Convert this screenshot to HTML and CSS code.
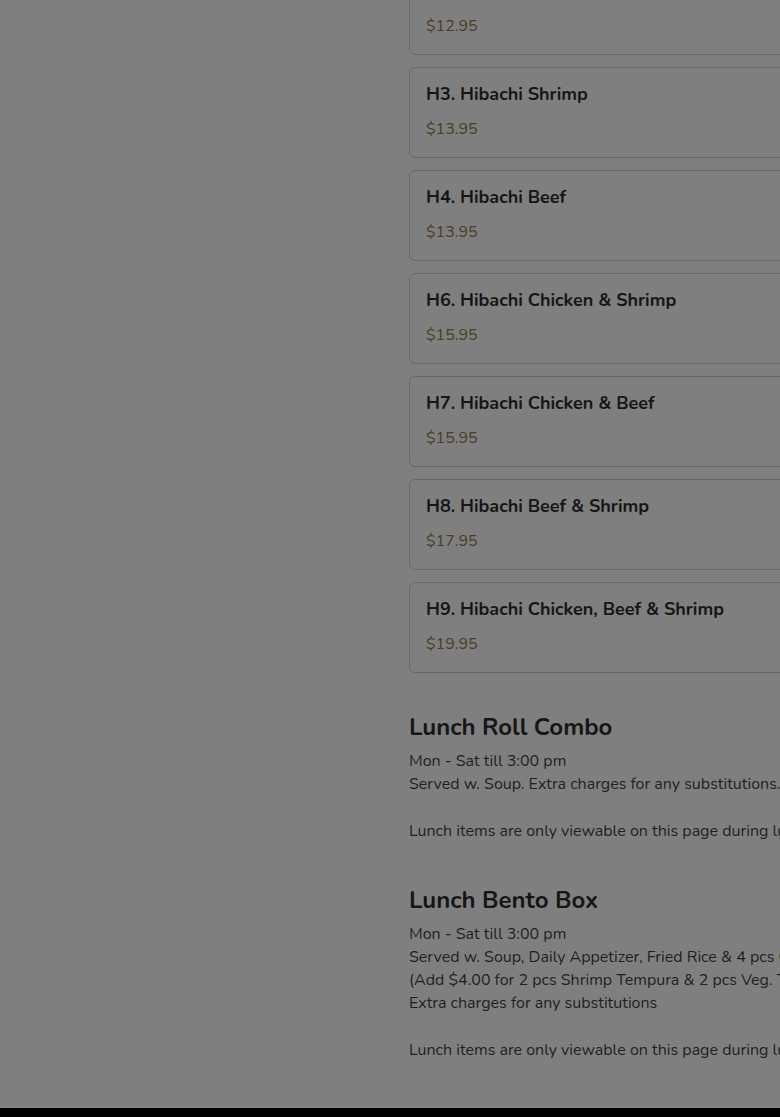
FILE: index.html
```html
<!DOCTYPE html>
<html>
<head>
<meta charset="utf-8">
<link rel="stylesheet" href="styles.css">
</head>
<body>
<div class="page">
  <div class="layout">
    <aside class="side"></aside>
    <main class="menu">
      <div class="cards">
        <div class="card"><div class="item-name">H2. Hibachi Chicken</div><div class="price">$12.95</div></div>
        <div class="card"><div class="item-name">H3. Hibachi Shrimp</div><div class="price">$13.95</div></div>
        <div class="card"><div class="item-name">H4. Hibachi Beef</div><div class="price">$13.95</div></div>
        <div class="card"><div class="item-name">H6. Hibachi Chicken &amp; Shrimp</div><div class="price">$15.95</div></div>
        <div class="card"><div class="item-name">H7. Hibachi Chicken &amp; Beef</div><div class="price">$15.95</div></div>
        <div class="card"><div class="item-name">H8. Hibachi Beef &amp; Shrimp</div><div class="price">$17.95</div></div>
        <div class="card"><div class="item-name">H9. Hibachi Chicken, Beef &amp; Shrimp</div><div class="price">$19.95</div></div>
      </div>
      <section class="section">
        <h2 class="section-title">Lunch Roll Combo</h2>
        <p class="section-desc">Mon - Sat till 3:00 pm<br>Served w. Soup. Extra charges for any substitutions.<br><br>Lunch items are only viewable on this page during lunch hours.</p>
      </section>
      <section class="section">
        <h2 class="section-title">Lunch Bento Box</h2>
        <p class="section-desc">Mon - Sat till 3:00 pm<br>Served w. Soup, Daily Appetizer, Fried Rice &amp; 4 pcs California Roll<br>(Add $4.00 for 2 pcs Shrimp Tempura &amp; 2 pcs Veg. Tempura)<br>Extra charges for any substitutions<br><br>Lunch items are only viewable on this page during lunch hours.</p>
      </section>
    </main>
  </div>
  <footer class="footer"></footer>
</div>
</body>
</html>
```
FILE: styles.css
```css
html, body {
  margin: 0;
  padding: 0;
  background: #7f7f7f;
}
body {
  font-family: "Nunito", "Lato", "Noto Sans", sans-serif;
  color: #1c1c1c;
}
.page {
  width: 780px;
  height: 1117px;
  overflow: hidden;
  display: flex;
  flex-direction: column;
}
.layout {
  display: grid;
  grid-template-columns: 409px 900px;
  flex: 1;
}
.menu {
  margin-top: -36px;
}
.cards {
  display: flex;
  flex-direction: column;
  gap: 12px;
}
.card {
  border: 1px solid #686868;
  border-radius: 6px;
  padding: 14px 16px 16px;
}
.item-name {
  font-size: 18px;
  line-height: 24px;
  font-weight: 700;
  color: #161616;
}
.price {
  margin-top: 11px;
  font-size: 16px;
  line-height: 24px;
  color: #4a3d22;
}
.section {
  margin-top: 39px;
}
.section + .section {
  margin-top: 42px;
}
.section-title {
  margin: 0;
  font-size: 24px;
  line-height: 30px;
  font-weight: 700;
  color: #161616;
}
.section-desc {
  margin: 8px 0 0;
  font-size: 16px;
  line-height: 23.2px;
  color: #1f1f1f;
  white-space: nowrap;
}
.footer {
  height: 9px;
  flex: none;
  background: #000;
  border-top: 2px solid #858585;
}
```
